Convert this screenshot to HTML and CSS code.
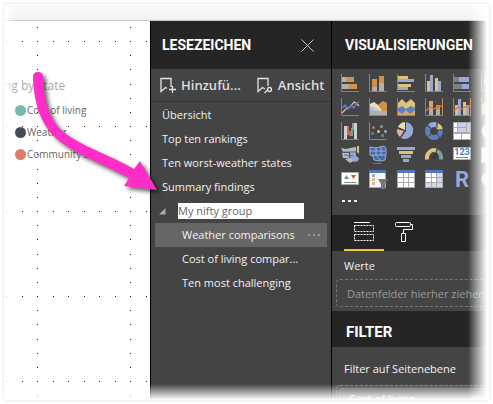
FILE: index.html
```html
<!DOCTYPE html>
<html lang="de">
<head>
<meta charset="utf-8">
<title>Lesezeichen</title>
<link rel="stylesheet" href="styles.css">
</head>
<body>
<div class="frame">
  <div class="topbar"></div>
  <div class="columns">
    <main class="canvas">
      <svg class="dots" aria-hidden="true">
        <defs><pattern id="grid" x="2" y="20" width="93" height="85" patternUnits="userSpaceOnUse">
          <path fill="#222" d="M0 0h1v1H0zM16 0h1v1h-1zM31 0h1v1h-1zM47 0h1v1h-1zM62 0h1v1h-1zM78 0h1v1h-1zM31 14h1v1h-1zM31 28h1v1h-1zM31 43h1v1h-1zM31 57h1v1h-1zM31 71h1v1h-1z"/>
        </pattern></defs>
        <rect width="100%" height="100%" fill="url(#grid)"/>
      </svg>
      <h2 class="chart-title">ng by state</h2>
      <ul class="legend">
        <li><span class="dot teal"></span>Cost of living</li>
        <li><span class="dot slate"></span>Weather</li>
        <li><span class="dot coral"></span>Community s</li>
      </ul>
    </main>

    <section class="bookmarks">
      <header class="head"><h1>LESEZEICHEN</h1>
        <button class="close" aria-label="Schließen"><svg width="13" height="13" viewBox="0 0 13 13"><path d="M.5.5l12 12M12.500.5l-12 12" stroke="#c8c8c8" fill="none"/></svg></button>
      </header>
      <div class="tools">
        <button><svg width="17" height="17" viewBox="0 0 17 17" fill="none" stroke="#e4e4e4"><path d="M7 11.500L5.500 10.500 1 14.500V1.500h10V10M12.500 9v7M9 12.500h7" stroke-width="1.300"/></svg>Hinzufü...</button>
        <button><svg width="17" height="17" viewBox="0 0 17 17" fill="none" stroke="#e4e4e4"><path d="M8 12L5.500 10.500 1 14.500V1.500h10V9M10 13.500l-2.500 2.500" stroke-width="1.300"/><circle cx="12.500" cy="12.500" r="2" stroke-width="1.300"/></svg>Ansicht</button>
      </div>
      <ul class="list">
        <li>Übersicht</li>
        <li>Top ten rankings</li>
        <li>Ten worst-weather states</li>
        <li>Summary findings</li>
        <li class="group"><svg width="7" height="7" viewBox="0 0 7 7"><path d="M6.500 0v6.500H0z" fill="#aaa"/></svg><input aria-label="Gruppenname" value="My nifty group"></li>
        <li class="child selected">Weather comparisons<button class="more" aria-label="Mehr"><i></i><i></i><i></i></button></li>
        <li class="child">Cost of living compar...</li>
        <li class="child">Ten most challenging</li>
      </ul>
    </section>

    <section class="visuals">
      <header class="head"><h1>VISUALISIERUNGEN</h1></header>
      <div class="icons">
        <svg viewBox="0 0 18 18"><path class="ax" d="M.5 0v17.500H18"/><path class="g" d="M1 3h4v5H1zM1 10h7v5H1z"/><path class="o" d="M5 3h8v5H5zM8 10h8v5H8z"/></svg>
        <svg viewBox="0 0 18 18"><path class="ax" d="M.5 0v17.500H18"/><path class="o" d="M3 5h5v8H3zM10 2h5v7h-5z"/><path class="g" d="M3 13h5v4H3zM10 9h5v8h-5z"/></svg>
        <svg viewBox="0 0 18 18"><path class="ax" d="M.5 0v17.500H18"/><path class="y" d="M1 2h10v3H1zM1 10h13v3H1z"/><path class="b" d="M1 5h16v3H1zM1 13h10v3H1z"/></svg>
        <svg viewBox="0 0 18 18"><path class="ax" d="M.5 0v17.500H18"/><path class="y" d="M2 7h3v10H2zM10 4h3v13h-3z"/><path class="b" d="M5 1h3v16H5zM13 7h3v10h-3z"/></svg>
        <svg viewBox="0 0 18 18"><path class="ax" d="M.5 0v17.500H18"/><path class="d" d="M1 3h5v5H1zM1 10h8v5H1z"/><path class="b" d="M6 3h10v5H6zM9 10h7v5H9z"/></svg>
        <svg viewBox="0 0 18 18"><path class="ax" d="M.5 0v17.500H18"/><path class="b" d="M3 2h5v9H3zM10 2h5v7h-5z"/></svg>

        <svg viewBox="0 0 18 18"><path class="ax" d="M.5 0v17.500H18"/><path fill="none" stroke="#e8b9a6" stroke-width="1.300" d="M1 15l5-5 3-1 4-5 2 1 3 3"/><path fill="none" stroke="#5b80c8" stroke-width="1.400" d="M1 10l3-3 3 4 3-4 3 3 2-4 3-2"/></svg>
        <svg viewBox="0 0 18 18"><path class="ax" d="M.5 0v17.500H18"/><path class="o" d="M5 11l5-5 4-3 4 2v12H5z"/><path fill="#f0dfb0" d="M1 6l4-2 4 3 4 6v2H1z"/><path fill="#b5c6e6" d="M1 8l4 1 5 3 4 5H1z"/><path class="g" d="M1 11l6 2h11v4H1z"/></svg>
        <svg viewBox="0 0 18 18"><path fill="#5c80c4" d="M1 7h17v10H1z"/><path fill="#dba569" d="M1 13l4 3 4-4 4 4 5-4v5H1z"/><path class="y" d="M1 5l4-4 4 4 5-4 4 4v5l-4-2-5 3-4-3-4 2z"/><path class="ax" d="M.5 0v17.500H18"/></svg>
        <svg viewBox="0 0 18 18"><path class="ax" d="M.5 0v17.500H18"/><path fill="#dba569" d="M4 3h4v7H4z"/><path class="g" d="M4 10h4v7H4zM11 11h4v6h-4z"/><path class="o" d="M11 7h4v5h-4z"/><path fill="none" stroke="#c77b51" stroke-width="1.300" d="M1 13l4-4 4 2 3-2 5-1"/><path fill="none" stroke="#c78b51" d="M17.500 0v17"/></svg>
        <svg viewBox="0 0 18 18"><path class="ax" d="M.5 0v17.500H18"/><path class="y" d="M2 7h3v10H2zM10 4h3v13h-3z"/><path class="b" d="M5 1h3v16H5zM13 7h3v10h-3z"/><path fill="none" stroke="#c77b51" stroke-width="1.300" d="M1 13l4-4 4 2 3-2 5-1"/><path fill="none" stroke="#c78b51" d="M17.500 0v17"/></svg>
        <svg viewBox="0 0 18 18"><path class="ax" d="M.5 0v17.500H18"/><path class="y" d="M1 6l6-3 6 4v9H1z"/></svg>

        <svg viewBox="0 0 18 18"><path class="ax" d="M.5 0v17.500H18"/><path fill="#cfcfcf" d="M3 4h3v13H3zM13 1h3v16h-3z"/><path fill="#c66b4d" d="M6 4h2v9H6z"/><path fill="#c66b4d" d="M8 9h2v5H8z"/><path fill="#7ba393" d="M10 6h2v8h-2zM11 1h2v7h-2z"/></svg>
        <svg viewBox="0 0 18 18"><path class="ax" d="M.5 0v17.500H18"/><circle cx="4.500" cy="5.500" r="1.500" fill="#c66b4d"/><circle cx="12.500" cy="4.500" r="1.500" fill="#7ba393"/><circle cx="3.500" cy="11.500" r="1.500" fill="#5c80c4"/><circle cx="9.500" cy="9.500" r="1.500" fill="#dfc27a"/><circle cx="16.500" cy="9.500" r="1.500" fill="#95a9d6"/><circle cx="13.500" cy="13.500" r="1.500" fill="#888"/></svg>
        <svg viewBox="0 0 18 18"><path class="b" d="M9 9V0a8.500 8.500 0 1 1-5 16z"/><path fill="#eadcb4" d="M8 8L1 5A8 8 0 0 1 8 0z"/><path fill="#dfb0a0" d="M7 9l-4 6A8.500 8.500 0 0 1 0 7z"/></svg>
        <svg viewBox="0 0 18 18" fill="none" stroke-width="5"><circle cx="9" cy="9" r="6.500" stroke="#5c7fbd"/><path stroke="#95a9d6" d="M5 4a6.500 6.500 0 0 1 6-1.200"/><path stroke="#dfc27a" d="M12 3.500a6.500 6.500 0 0 1 3.300 4"/><path stroke="#444" stroke-width="1" d="M12 0v6M18 8h-6M1 3l5 3M1 16l5-4M15 16l-3-4"/></svg>
        <svg viewBox="0 0 18 18"><path fill="#aaa" d="M0 0h18v18H0z"/><path fill="#fff" d="M1 1h3v4H1zM1 6h3v4H1zM1 12h7v5H1zM9 12h8v5H9z"/><path fill="#c6d2ea" d="M5 1h8v4H5zM14 1h3v9h-3zM5 6h8v4H5z"/></svg>
        <svg viewBox="0 0 18 18"><circle cx="9" cy="9" r="8.500" fill="#c4d8e8"/><path fill="#8eaccc" d="M2 5l6-2 3 5-5 5z"/></svg>

        <svg viewBox="0 0 18 18"><path fill="#b9b9b9" d="M0 2l5 1 4-1 6-1v5H2zM1 7h7v5H2zM4 13l9-2 1 3-5 3z"/><path class="b" d="M9 6l6-1v5l3 2-1 3-4 1-4-5z"/><path class="y" d="M16 0h2v8l-2-2z"/><path fill="none" stroke="#526c9b" d="M1 6h14M3 9l10 1"/></svg>
        <svg viewBox="0 0 18 18"><path fill="#4769a9" stroke="#9cafd7" d="M1 1l6 1 8-2 2 2v6l-1 6-5 1-6-1-1-4-3-1z"/><path fill="none" stroke="#9cafd7" d="M1 5h15M3 9h13M7 1v8l4 5M12 1v9"/><path fill="#777" d="M4 17h9v1H4z"/></svg>
        <svg viewBox="0 0 18 18"><path class="b" d="M0 1h18v3H0zM4 9h10v3H4zM6 13h6v3H6z"/><path class="y" d="M2 5h14v3H2z"/></svg>
        <svg viewBox="0 0 18 18"><path fill="none" stroke="#dfc27a" stroke-width="4" d="M2 13.500a7 8 0 0 1 9-9"/><path fill="none" stroke="#7ba393" stroke-width="4" d="M12 5a7 8 0 0 1 4 8.500"/><path stroke="#333" stroke-width="1.500" d="M8 13l4-6"/></svg>
        <svg viewBox="0 0 18 18"><path fill="#fff" stroke="#aaa" d="M.5 1.500h17v12H.5z"/><text x="9" y="9" class="num">123</text><path stroke="#888" d="M3 11.500h12"/></svg>
        <svg viewBox="0 0 18 18"><path fill="#eee" stroke="#aaa" d="M.5 1.500h17v15H.5z"/></svg>

        <svg viewBox="0 0 18 18"><path fill="#fff" stroke="#aaa" d="M.5 2.500h17v12H.5z"/><path fill="#6d9e8d" d="M3 9l2.500-4L8 9z"/><path fill="#c35e3e" d="M10 5h5l-2.500 4z"/><path stroke="#888" d="M3 12.500h12"/></svg>
        <svg viewBox="0 0 18 18"><path fill="#f7f7f7" stroke="#aaa" d="M.5.5h16v17H.5z"/><path class="bl" d="M0 0h17v3H0z"/><path class="b" d="M3 4h3v3H3z"/><path class="y" d="M3 8h3v3H3z"/><path fill="#dfb0a0" d="M3 12h3v3H3z"/><path fill="#777" d="M9 9h10l-3 5v5h-4v-5z"/></svg>
        <svg viewBox="0 0 18 18"><path fill="#aaa" d="M0 0h18v18H0z"/><path class="bl" d="M0 0h18v3H0z"/><path fill="#fff" d="M1 3h5v4H1zM7 3h4v4H7zM12 3h5v4h-5zM1 8h5v4H1zM7 8h4v4H7zM12 8h5v4h-5zM1 13h5v4H1zM7 13h4v4H7zM12 13h5v4h-5z"/></svg>
        <svg viewBox="0 0 18 18"><path fill="#aaa" d="M0 0h18v18H0z"/><path class="bl" d="M0 0h18v3H0z"/><path fill="#fff" d="M1 3h5v4H1zM7 3h4v4H7zM1 8h5v4H1zM7 8h4v4H7z"/><path fill="#cfdaf0" d="M12 3h5v4h-5zM12 8h5v4h-5zM1 13h5v4H1zM7 13h4v4H7zM12 13h5v4h-5z"/></svg>
        <svg viewBox="0 0 18 18"><text x="9" y="17" class="r">R</text></svg>
        <svg viewBox="0 0 18 18"><circle cx="9" cy="9" r="8.500" fill="#c8d6cc"/></svg>
      </div>
      <button class="ellipsis" aria-label="Weitere"><i></i><i></i><i></i></button>
      <nav class="tabs">
        <button class="active" aria-label="Felder"><svg width="20" height="20" viewBox="0 0 20 20" fill="none" stroke="#fff"><path d="M0 .5h16"/><path stroke-dasharray="2 1" d="M.5 3.500h19v6H.5zM.5 12.500h19v6H.5z"/></svg></button>
        <button aria-label="Format"><svg width="19" height="20" viewBox="0 0 19 20" fill="none" stroke="#fff"><rect x=".5" y=".5" width="15" height="4" rx="1"/><path d="M15.500 2.500h2v5h-9V11M6.500 11.500h4v8h-4z"/></svg></button>
      </nav>
      <div class="fields"><h3>Werte</h3><div class="drop">Datenfelder hierher ziehen</div></div>
      <header class="subhead"><h2>FILTER</h2></header>
      <div class="filters"><h3>Filter auf Seitenebene</h3><div class="dropzone"><div class="card">Cost of living<span>✕</span></div></div></div>
    </section>
  </div>
  <svg class="arrow" width="170" height="210" viewBox="0 0 170 210" aria-hidden="true"><path fill="#ff2dc8" d="M33 77Q33 72 38 72Q43 72 43 77C44 103 50 122 66 134C83 147 108 154 134 169L140 161L157 190L124 186L129 178C103 164 74 154 56 138C38 121 34 99 33 77z"/></svg>
  <div class="fade"></div>
</div>
</body>
</html>
```
FILE: styles.css
```css
* { box-sizing: border-box; }
body {
  margin: 0;
  padding: 4px;
  background: #fff;
  font: 11px/24px "Open Sans", "Noto Sans", sans-serif;
  color: #f2f2f2;
}
h1, h2, h3, ul { margin: 0; padding: 0; font: inherit; list-style: none; }
button { margin: 0; padding: 0; border: 0; background: none; color: inherit; font: inherit; }
svg { flex: none; }

.frame {
  position: relative;
  display: flex;
  flex-direction: column;
  height: calc(100vh - 8px);
  overflow: hidden;
  box-shadow: 0 0 3px #ddd;
}
.topbar { flex: none; height: 17px; background: linear-gradient(#fbfbfb, #f2f2f2); border-bottom: 1px solid #c6c6c6; }
.columns { flex: 1; min-height: 0; display: grid; grid-template-columns: 146fr 181fr 158fr; }
.columns > * { min-width: 0; overflow: hidden; }
.fade {
  position: absolute;
  inset: 0;
  pointer-events: none;
  background:
    linear-gradient(to left, #fff 2px, transparent 21px),
    linear-gradient(to top, #fff 0, transparent 16px),
    linear-gradient(to right, #fff, transparent 12px);
}

.canvas { position: relative; background: #fff; color: #666; padding-top: 54px; }
.dots { position: absolute; inset: 0; width: 100%; height: 100%; }
.chart-title { position: relative; font-size: 12px; line-height: 22px; color: #aaa; }
.legend { position: relative; padding-left: 11px; font-size: 10px; line-height: 22px; margin-top: 2px; }
.legend li { display: flex; align-items: center; gap: 1px; }
.dot { width: 11px; height: 11px; border-radius: 50%; }
.teal { background: #74b8ae; }
.slate { background: #434c54; }
.coral { background: #e07b6b; }
.arrow { position: absolute; left: -4px; top: -4px; filter: drop-shadow(3px 3px 2px #0009); }

.bookmarks, .visuals { background: #444; border-left: 1px solid #000; }
.head { display: flex; align-items: center; justify-content: space-between; height: 48px; padding: 0 17px 0 11px; background: #252525; }
.head h1 { font: bold 14px/24px Roboto, sans-serif; color: #fff; }
.subhead h2 { font: bold 15px/24px Roboto, sans-serif; color: #fff; }
.close { display: flex; }
.tools { display: flex; gap: 16px; height: 33px; padding-left: 9px; border-bottom: 1px solid #333; font-size: 13px; font-weight: 600; color: #ddd; white-space: nowrap; }
.tools button { display: flex; align-items: center; gap: 4px; }
.list { padding-top: 1px; }
.list li { height: 24px; padding-left: 11px; white-space: nowrap; }
.list .group { display: flex; align-items: center; gap: 12px; padding-left: 8px; }
.group input { width: 126px; height: 16px; padding: 0; border: 0; background: #fff; color: #666; font: inherit; line-height: 16px; }
.list .child { margin: 0 4px; padding-left: 27px; }
.list .selected { display: flex; justify-content: space-between; background: #666; padding-right: 7px; }
.more, .ellipsis { display: flex; align-items: center; gap: 3px; }
.more i { width: 2px; height: 2px; background: #999; }

.icons { display: grid; grid-template-columns: repeat(6, 18px); gap: 6px 10px; padding: 5px 0 0 9px; }
.icons svg { width: 18px; height: 18px; overflow: visible; }
.ax { fill: none; stroke: #858585; }
.g { fill: #b0b0b0; }
.d { fill: #808080; }
.o { fill: #d0914a; }
.y { fill: #dfc27a; }
.b { fill: #95a9d6; }
.bl { fill: #5077b8; }
.num { font: bold 9px Roboto, sans-serif; fill: #5077a8; text-anchor: middle; }
.r { font: bold 22px Roboto, sans-serif; fill: #95a9d6; text-anchor: middle; }
.ellipsis { height: 27px; padding: 0 0 2px 10px; }
.ellipsis i { width: 3px; height: 2px; background: #eee; }
.visuals .head { padding-left: 13px; }
.tabs { display: flex; height: 36px; padding-left: 12px; background: #252525; }
.tabs button { display: flex; align-items: center; justify-content: center; width: 40px; border-bottom: 2px solid transparent; }
.tabs .active { border-color: #ecc82c; }
.fields { height: 60px; padding: 3px 0 0 4px; white-space: nowrap; }
.fields h3, .filters h3 { padding-left: 8px; }
.drop { height: 28px; margin-top: 1px; padding-left: 10px; border: 1px dashed #777; border-radius: 4px; line-height: 27px; color: #999; }
.subhead { display: flex; align-items: center; height: 36px; padding: 6px 14px 0; background: #252525; }
.filters { padding: 10px 0 0 4px; white-space: nowrap; }
.dropzone { margin-top: 4px; padding: 2px; border: 1px dashed #777; border-radius: 4px; }
.card { display: flex; justify-content: space-between; padding: 0 5px 0 9px; line-height: 20px; background: #555; border: 1px solid #666; border-radius: 3px; }
```
